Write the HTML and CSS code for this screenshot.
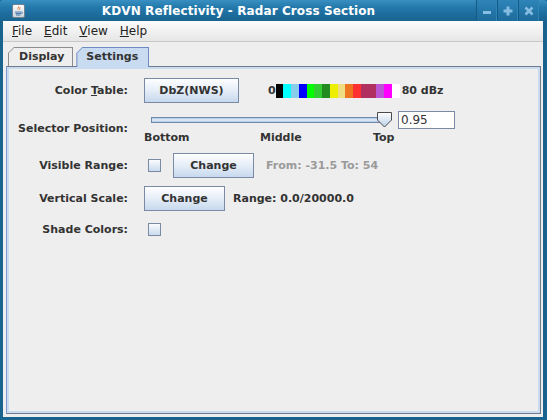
FILE: index.html
```html
<!DOCTYPE html>
<html>
<head>
<meta charset="utf-8">
<link rel="stylesheet" href="styles.css">
</head>
<body>
<div class="window">
  <div class="titlebar">
    <svg class="app-icon" width="13" height="14" viewBox="0 0 13 14">
      <defs>
        <linearGradient id="ig" x1="0" y1="0" x2="0" y2="1">
          <stop offset="0" stop-color="#ffffff"/>
          <stop offset="1" stop-color="#c9d2da"/>
        </linearGradient>
      </defs>
      <rect x="0.5" y="0.5" width="12" height="13" rx="1.5" fill="url(#ig)" stroke="#6e8294"/>
      <path d="M6.5 2 C8 3.5 5 4.5 6.5 6.5 C5 5.5 5.5 4 6.5 2 Z" fill="#e0601a"/>
      <path d="M7.8 3 C8.6 4 7.2 5 7.6 6" stroke="#e0601a" stroke-width="0.8" fill="none"/>
      <path d="M3 8 H9.5 M3.5 9.5 H9 M4 11 H8.5" stroke="#3a6ea5" stroke-width="0.9"/>
      <path d="M9.5 8 C11 8 11 9.6 9.2 9.6" stroke="#3a6ea5" stroke-width="0.8" fill="none"/>
    </svg>
    <div class="title">KDVN Reflectivity - Radar Cross Section</div>
    <div class="wbtns">
      <div class="wbtn">
        <svg width="10" height="10" viewBox="0 0 10 10"><rect x="1" y="5" width="8" height="3" fill="#86bde2"/></svg>
      </div>
      <div class="wbtn">
        <svg width="10" height="10" viewBox="0 0 10 10"><rect x="0.5" y="3.5" width="9" height="3" fill="#86bde2"/><rect x="3.5" y="0.5" width="3" height="9" fill="#86bde2"/></svg>
      </div>
      <div class="wbtn">
        <svg width="10" height="10" viewBox="0 0 10 10"><path d="M1.5 1.5 L8.5 8.5 M8.5 1.5 L1.5 8.5" stroke="#86bde2" stroke-width="2.6"/></svg>
      </div>
    </div>
  </div>
  <div class="client">
    <div class="menubar">
      <span class="menu"><u>F</u>ile</span>
      <span class="menu"><u>E</u>dit</span>
      <span class="menu"><u>V</u>iew</span>
      <span class="menu"><u>H</u>elp</span>
    </div>
    <div class="tabs">
      <div class="tab"><div class="tab-in">Display</div></div>
      <div class="tab sel"><div class="tab-in">Settings</div></div>
    </div>
    <div class="panel">
      <div class="form">
        <div class="lbl">Color <u>T</u>able:</div>
        <div class="ctl">
          <div class="btn w95">DbZ(NWS)</div>
          <span class="txt zero">0</span>
          <div class="cbar">
            <span style="background:#000000"></span>
            <span style="background:#00ffff"></span>
            <span style="background:#87ceeb"></span>
            <span style="background:#0000ff"></span>
            <span style="background:#00ff00"></span>
            <span style="background:#32cd32"></span>
            <span style="background:#228b22"></span>
            <span style="background:#eeee00"></span>
            <span style="background:#eedd82"></span>
            <span style="background:#ee7621"></span>
            <span style="background:#ff3030"></span>
            <span style="background:#b03060"></span>
            <span style="background:#b03060"></span>
            <span style="background:#ba55d3"></span>
            <span style="background:#ff00ff"></span>
            <span style="background:#ffffff"></span>
          </div>
          <span class="txt dbz">80 dBz</span>
        </div>

        <div class="lbl">Selector Position:</div>
        <div class="ctl top">
          <div class="slider">
            <div class="track-area">
              <div class="track"></div>
              <svg class="thumb" width="16" height="16" viewBox="0 0 16 16">
                <defs>
                  <linearGradient id="tg" x1="0" y1="0" x2="0" y2="1">
                    <stop offset="0" stop-color="#ffffff"/>
                    <stop offset="1" stop-color="#b9cfe7"/>
                  </linearGradient>
                </defs>
                <path d="M0.5 0.5 H14.5 V8 L7.5 15 L0.5 8 Z" fill="url(#tg)" stroke="#4a4a4a"/>
              </svg>
            </div>
            <div class="ticks">
              <span>Bottom</span>
              <span>Middle</span>
              <span>Top</span>
            </div>
          </div>
          <div class="field">0.95</div>
        </div>

        <div class="lbl">Visible Range:</div>
        <div class="ctl">
          <div class="check"></div>
          <div class="btn w81 ml12">Change</div>
          <span class="txt muted ml12">From: -31.5 To: 54</span>
        </div>

        <div class="lbl">Vertical Scale:</div>
        <div class="ctl">
          <div class="btn w81">Change</div>
          <span class="txt ml8">Range: 0.0/20000.0</span>
        </div>

        <div class="lbl">Shade Colors:</div>
        <div class="ctl">
          <div class="check"></div>
        </div>
      </div>
    </div>
  </div>
</div>
</body>
</html>
```

FILE: styles.css
```css
html, body {
  margin: 0;
  padding: 0;
}
body {
  width: 547px;
  height: 420px;
  overflow: hidden;
  font-family: "DejaVu Sans", sans-serif;
}
.window {
  width: 547px;
  height: 420px;
  background: #19648f;
  display: flex;
  flex-direction: column;
  box-sizing: border-box;
}
.titlebar {
  height: 21px;
  flex: none;
  display: flex;
  align-items: center;
  background: linear-gradient(#3a8fc2 0%, #2479ab 35%, #1c6c9c 70%, #19648f 100%);
  border-radius: 3px 3px 0 0;
}
.app-icon {
  margin-left: 12px;
  flex: none;
}
.title {
  flex: 1;
  text-align: center;
  color: #ffffff;
  font-weight: bold;
  font-size: 12px;
  letter-spacing: 0.1px;
  padding-right: 24px;
  white-space: nowrap;
}
.wbtns {
  display: flex;
  height: 21px;
  margin-right: 8px;
  flex: none;
}
.wbtn {
  width: 21px;
  height: 21px;
  box-sizing: border-box;
  border-left: 1px solid #135a84;
  border-right: 1px solid #2d86b8;
  background: linear-gradient(#2e84b8, #1c6b9b);
  display: flex;
  align-items: center;
  justify-content: center;
}
.client {
  flex: 1;
  margin: 0 4px 3px 3px;
  background: #eeeeee;
  display: flex;
  flex-direction: column;
}
.menubar {
  height: 20px;
  flex: none;
  border-bottom: 1px solid #c8c8c8;
  background: linear-gradient(#fbfbfb, #f1f1f1 50%, #e6e6e6);
  display: flex;
  align-items: center;
  padding-left: 3px;
  font-size: 12px;
  color: #222;
}
.menu {
  padding: 0 6px;
}
.menu u {
  text-decoration-thickness: 1px;
  text-underline-offset: 1px;
}
.tabs {
  flex: none;
  display: flex;
  padding: 5px 0 0 5px;
  gap: 3px;
  align-items: flex-end;
  position: relative;
  z-index: 1;
}
.tab {
  height: 19px;
  box-sizing: border-box;
  padding: 1px 1px 0 1px;
  background: #8c8c8c;
  clip-path: polygon(6px 0, 100% 0, 100% 100%, 0 100%, 0 6px);
}
.tab-in {
  height: 18px;
  box-sizing: border-box;
  background: #eeeeee;
  clip-path: polygon(5px 0, 100% 0, 100% 100%, 0 100%, 0 5px);
  font-size: 11px;
  font-weight: bold;
  color: #333;
  line-height: 18px;
  padding: 0 8px 0 10px;
}
.tab.sel {
  background: #6d8ac2;
  height: 20px;
  margin-bottom: -1px;
}
.tab.sel .tab-in {
  height: 20px;
  background: #c8dbf1;
  line-height: 18px;
  padding: 0 10px 0 9px;
}
.panel {
  flex: 1;
  margin: 0 2px 3px 3px;
  border: 1px solid #6f7b88;
  border-left-color: #8797d2;
  box-shadow: inset 0 0 0 2px #c8dbf1;
  background: #eeeeee;
}
.form {
  display: grid;
  grid-template-columns: 119px auto;
  grid-template-rows: 25px 34px 25px 25px 21px;
  column-gap: 16px;
  row-gap: 8px;
  padding: 11px 0 0 2px;
  align-items: center;
}
.lbl {
  text-align: right;
  font-size: 11px;
  font-weight: bold;
  color: #333;
  white-space: nowrap;
}
.lbl u {
  text-decoration-thickness: 1px;
  text-underline-offset: 1px;
}
.ctl {
  display: flex;
  align-items: center;
  height: 100%;
}
.ctl.top {
  align-items: flex-start;
}
.txt {
  font-size: 11px;
  font-weight: bold;
  color: #333;
  white-space: nowrap;
}
.muted {
  color: #9a9a9a;
}
.zero {
  margin-left: 29px;
}
.dbz {
  margin-left: 2px;
}
.ml12 {
  margin-left: 12px;
}
.ml8 {
  margin-left: 8px;
}
.btn {
  height: 25px;
  box-sizing: border-box;
  border: 1px solid #7a8aa5;
  background: linear-gradient(#fdfeff 0%, #e8eff8 45%, #c7d9ee 100%);
  font-size: 11px;
  font-weight: bold;
  color: #333;
  display: flex;
  align-items: center;
  justify-content: center;
  flex: none;
}
.w95 { width: 95px; }
.w81 { width: 81px; }
.cbar {
  display: flex;
  width: 124px;
  height: 14px;
  flex: none;
}
.cbar span {
  flex: 1;
}
.check {
  width: 13px;
  height: 13px;
  box-sizing: border-box;
  border: 1px solid #7a8aa5;
  background: linear-gradient(#fafcfe, #c9dbef);
  margin-left: 4px;
  flex: none;
}
.slider {
  width: 248px;
  flex: none;
}
.track-area {
  position: relative;
  height: 18px;
}
.track {
  position: absolute;
  left: 7px;
  right: 6px;
  top: 6px;
  height: 6px;
  box-sizing: border-box;
  border: 1px solid #7088ad;
  background: linear-gradient(#a9c3e3, #e7eef8 50%, #a9c3e3);
}
.thumb {
  position: absolute;
  left: 233px;
  top: 1px;
}
.ticks {
  display: grid;
  grid-template-columns: 116px 113px auto;
  font-size: 11px;
  font-weight: bold;
  color: #333;
  line-height: 16px;
  padding-top: 1px;
}
.field {
  margin-left: 6px;
  width: 57px;
  height: 18px;
  box-sizing: border-box;
  border: 1px solid #7a8aa5;
  background: #ffffff;
  font-size: 12px;
  color: #333;
  line-height: 16px;
  padding-left: 2px;
  flex: none;
}
```
